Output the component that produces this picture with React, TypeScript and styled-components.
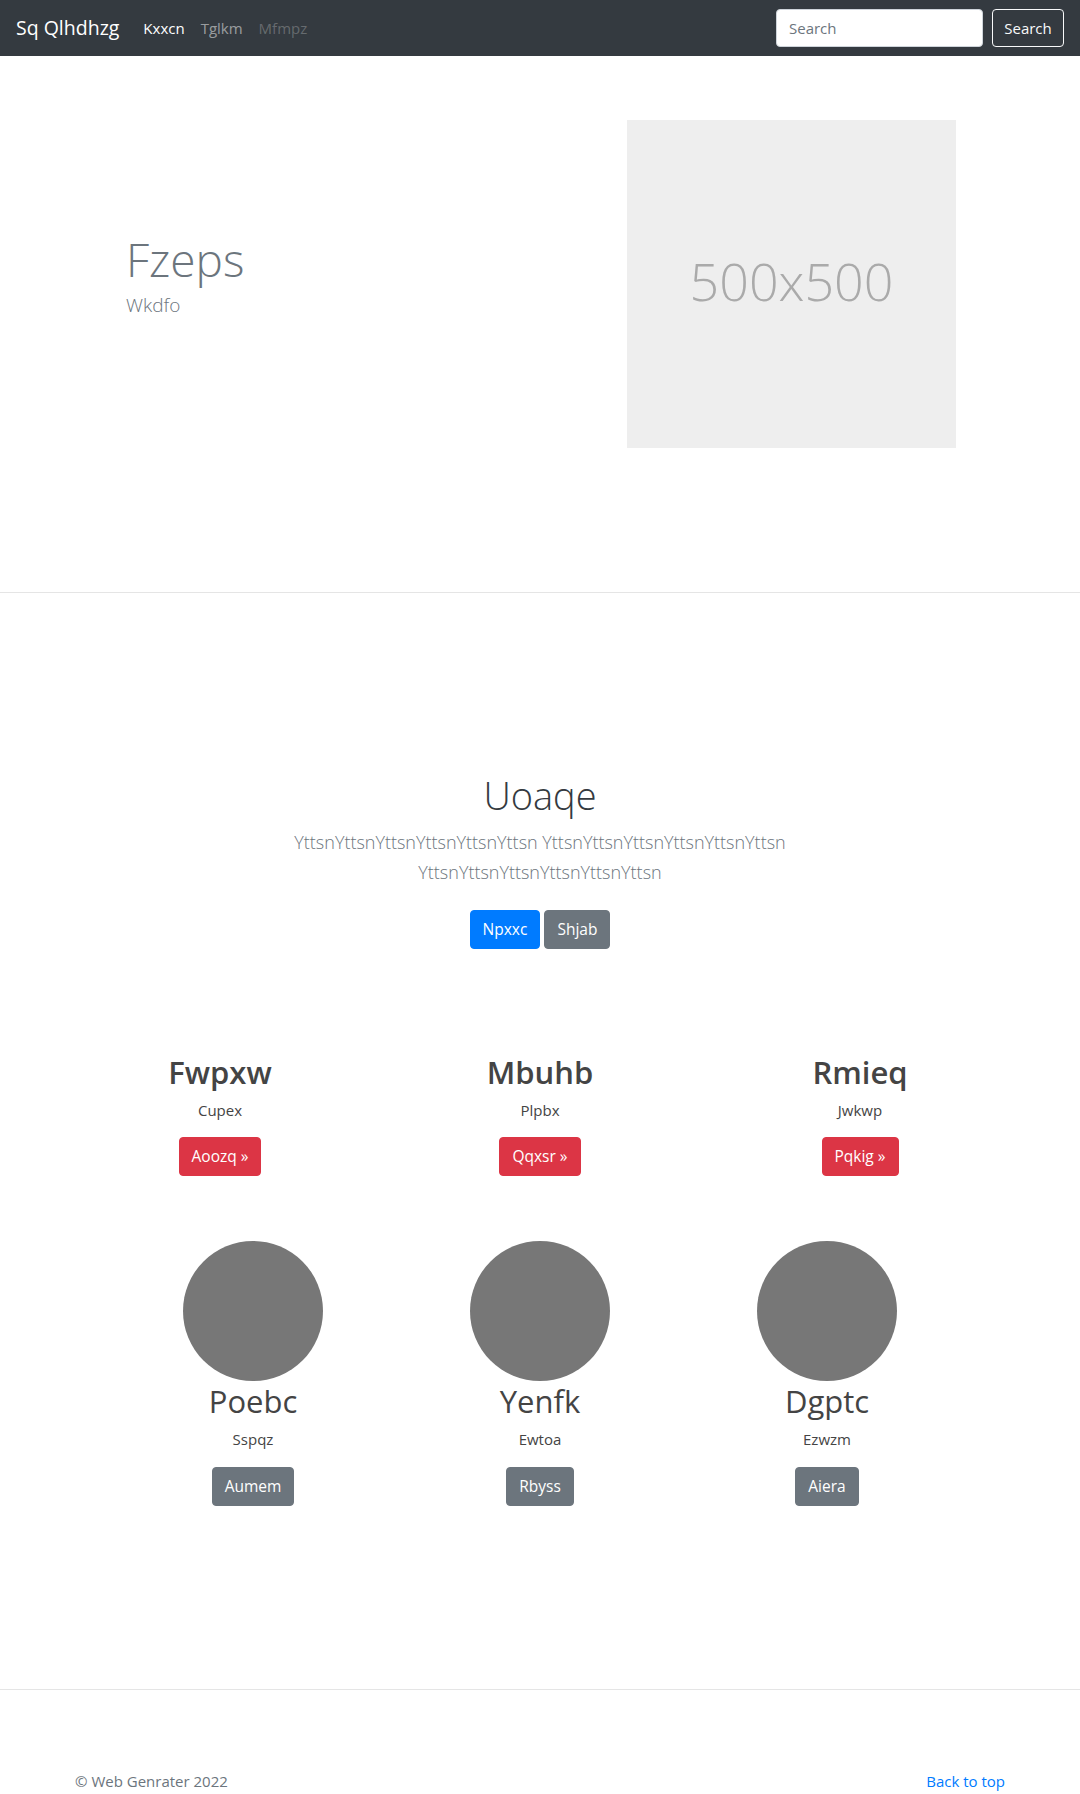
import styled, { createGlobalStyle } from "styled-components"

const GlobalStyle = createGlobalStyle`
  body {
    margin: 0;
    font-family: "Open Sans", "Noto Sans", sans-serif;
    font-size: 16px;
    line-height: 1.5;
    color: #212529;
    background: #fff;
  }
  * { box-sizing: border-box; }
`;

const features = [
  { title: "Fwpxw", text: "Cupex", action: "Aoozq" },
  { title: "Mbuhb", text: "Plpbx", action: "Qqxsr" },
  { title: "Rmieq", text: "Jwkwp", action: "Pqkig" },
]

const people = [
  { name: "Poebc", text: "Sspqz", action: "Aumem" },
  { name: "Yenfk", text: "Ewtoa", action: "Rbyss" },
  { name: "Dgptc", text: "Ezwzm", action: "Aiera" },
]

const word = "Yttsn".repeat(6)

export default function App() {
  return (
    <>
      <GlobalStyle />
      <Navbar>
        <Brand href="#">Sq Qlhdhzg</Brand>
        <NavList>
          <NavLink $state="active" href="#">Kxxcn</NavLink>
          <NavLink href="#">Tglkm</NavLink>
          <NavLink $state="disabled" href="#">Mfmpz</NavLink>
        </NavList>
        <SearchForm onSubmit={(e) => e.preventDefault()}>
          <SearchInput type="text" placeholder="Search" />
          <SearchButton type="submit">Search</SearchButton>
        </SearchForm>
      </Navbar>

      <Hero>
        <HeroText>
          <HeroTitle>Fzeps</HeroTitle>
          <HeroLead>Wkdfo</HeroLead>
        </HeroText>
        <Placeholder>500x500</Placeholder>
      </Hero>

      <Intro>
        <IntroInner>
          <IntroTitle>Uoaqe</IntroTitle>
          <IntroLead>
            {word} {word} {word}
          </IntroLead>
          <ButtonRow>
            <Button $variant="primary">Npxxc</Button>
            <Button $variant="secondary">Shjab</Button>
          </ButtonRow>
        </IntroInner>
      </Intro>

      <Features>
        {features.map((f) => (
          <Column key={f.title}>
            <FeatureTitle>{f.title}</FeatureTitle>
            <Text>{f.text}</Text>
            <Button $variant="danger">{f.action} &raquo;</Button>
          </Column>
        ))}
      </Features>

      <Marketing>
        {people.map((p) => (
          <Column key={p.name}>
            <Circle />
            <PersonName>{p.name}</PersonName>
            <Text>{p.text}</Text>
            <Button $variant="secondary">{p.action}</Button>
          </Column>
        ))}
      </Marketing>

      <Footer>
        <FooterInner>
          <FooterText>© Web Genrater 2022</FooterText>
          <FooterLink href="#">Back to top</FooterLink>
        </FooterInner>
      </Footer>
    </>
  )
}

const Navbar = styled.nav`
  display: flex;
  align-items: center;
  height: 56px;
  padding: 0 16px;
  background: #343a40;
`;

const Brand = styled.a`
  font-size: 19.5px;
  line-height: 30px;
  color: #fff;
  text-decoration: none;
  margin-right: 16px;
`;

const NavList = styled.div`
  display: flex;
`;

const NavLink = styled.a<{ $state?: "active" | "disabled" }>`
  padding: 8px;
  font-size: 15px;
  text-decoration: none;
  color: ${(p) =>
    p.$state === "active"
      ? "#fff"
      : p.$state === "disabled"
      ? "rgba(255,255,255,.25)"
      : "rgba(255,255,255,.5)"};
`;

const SearchForm = styled.form`
  display: flex;
  gap: 9px;
  margin-left: auto;
`;

const SearchInput = styled.input`
  width: 207px;
  height: 38px;
  padding: 6px 12px;
  font-family: inherit;
  font-size: 15px;
  color: #495057;
  border: 1px solid #ced4da;
  border-radius: 4px;
  &::placeholder { color: #6c757d; }
`;

const SearchButton = styled.button`
  width: 72px;
  height: 38px;
  padding: 0;
  font-family: inherit;
  font-size: 15px;
  color: #f8f9fa;
  background: transparent;
  border: 1px solid #f8f9fa;
  border-radius: 4px;
`;

const Hero = styled.section`
  display: flex;
  justify-content: space-between;
  align-items: flex-start;
  padding: 64px 124px 144px 126px;
  border-bottom: 1px solid #e5e5e5;
`;

const HeroText = styled.div`
  padding-top: 112px;
`;

const HeroTitle = styled.h1`
  margin: 0 0 3px;
  font-size: 46px;
  font-weight: 300;
  line-height: 1.2;
  color: #6c757d;
`;

const HeroLead = styled.p`
  margin: 0;
  font-size: 19px;
  font-weight: 300;
  line-height: 30px;
  color: #6c757d;
`;

const Placeholder = styled.div`
  display: flex;
  align-items: center;
  justify-content: center;
  width: 329px;
  height: 328px;
  padding-bottom: 6px;
  background: #eee;
  color: #aaa;
  font-size: 52px;
  font-weight: 300;
`;

const Intro = styled.section`
  padding-top: 180px;
  text-align: center;
`;

const IntroInner = styled.div`
  max-width: 610px;
  margin: 0 auto;
`;

const IntroTitle = styled.h1`
  margin: 0 0 8px;
  font-size: 38px;
  font-weight: 300;
  line-height: 1.2;
  color: #343a40;
`;

const IntroLead = styled.p`
  margin: 0 0 23px;
  font-size: 18px;
  font-weight: 300;
  line-height: 30px;
  color: #6c757d;
`;

const ButtonRow = styled.div`
  display: flex;
  justify-content: center;
  gap: 4px;
`;

const variants = {
  primary: "#007bff",
  secondary: "#6c757d",
  danger: "#dc3545",
}

const Button = styled.a<{ $variant: keyof typeof variants }>`
  display: inline-block;
  padding: 6px 12px;
  font-size: 15.5px;
  line-height: 25px;
  color: #fff;
  background: ${(p) => variants[p.$variant]};
  border: 1px solid ${(p) => variants[p.$variant]};
  border-radius: 4px;
  text-decoration: none;
  cursor: pointer;
`;

const Features = styled.section`
  display: grid;
  grid-template-columns: repeat(3, 320px);
  width: 960px;
  margin: 105px auto 0;
`;

const Column = styled.div`
  display: flex;
  flex-direction: column;
  align-items: center;
  text-align: center;
`;

const FeatureTitle = styled.h2`
  margin: 0 0 8px;
  font-size: 31px;
  font-weight: 600;
  line-height: 1.2;
  color: #444;
`;

const Text = styled.p`
  margin: 0 0 16px;
  font-size: 15px;
  color: #444;
`;

const Marketing = styled.section`
  display: grid;
  grid-template-columns: repeat(3, 287px);
  width: 861px;
  margin: 65px auto 0;
`;

const Circle = styled.div`
  width: 140px;
  height: 140px;
  margin-bottom: 2px;
  border-radius: 50%;
  background: #777;
`;

const PersonName = styled.h2`
  margin: 0 0 8px;
  font-size: 31px;
  font-weight: 400;
  line-height: 1.2;
  color: #444;
`;

const Footer = styled.footer`
  margin-top: 183px;
  padding-top: 80px;
  border-top: 1px solid #e5e5e5;
`;

const FooterInner = styled.div`
  display: flex;
  justify-content: space-between;
  width: 960px;
  margin: 0 auto;
  padding: 0 15px;
`;

const FooterText = styled.p`
  margin: 0;
  font-size: 15px;
  color: #6c757d;
`;

const FooterLink = styled.a`
  font-size: 15px;
  color: #007bff;
  text-decoration: none;
`;
